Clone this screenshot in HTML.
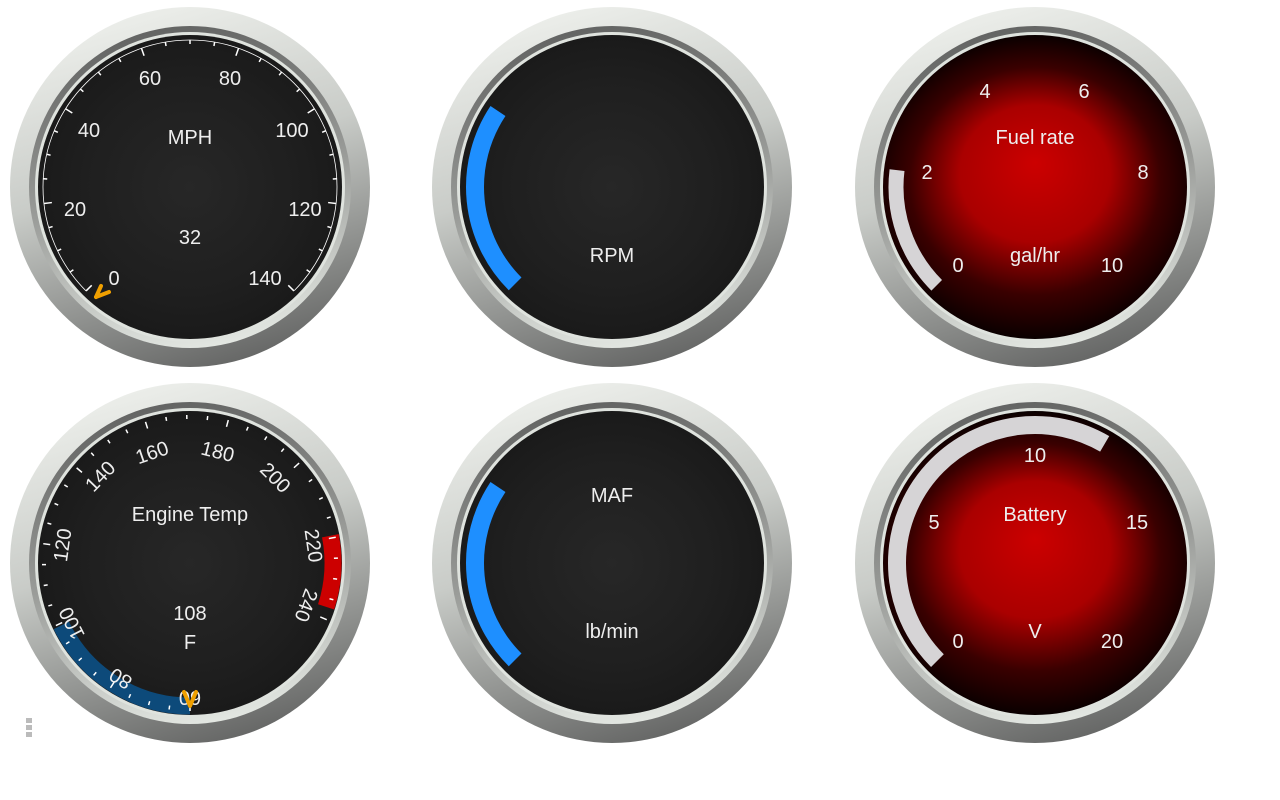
<!DOCTYPE html>
<html><head><meta charset="utf-8"><style>
html,body{margin:0;padding:0;background:#fff;width:1280px;height:800px;overflow:hidden}
svg{display:block}
text{font-family:"Liberation Sans",sans-serif;fill:#eeeeee;font-size:20px}
</style></head><body>
<svg width="1280" height="800" viewBox="0 0 1280 800" xmlns="http://www.w3.org/2000/svg">
<defs>
<linearGradient id="outer" x1="0.3" y1="0" x2="0.6" y2="1">
<stop offset="0" stop-color="#eef0ec"/><stop offset="0.45" stop-color="#c9ccc8"/><stop offset="1" stop-color="#666766"/></linearGradient>
<linearGradient id="inner" x1="0.4" y1="0" x2="0.6" y2="1">
<stop offset="0" stop-color="#626362"/><stop offset="0.5" stop-color="#9a9c99"/><stop offset="1" stop-color="#e4e8e3"/></linearGradient>
<radialGradient id="dark" cx="0.5" cy="0.5" r="0.5">
<stop offset="0" stop-color="#272727"/><stop offset="0.7" stop-color="#1f1f1f"/><stop offset="1" stop-color="#1a1a1a"/></radialGradient>
<radialGradient id="red" cx="0.5" cy="0.5" r="0.5" fx="0.5" fy="0.42" gradientTransform="translate(0.5 0.5) scale(1.1 1) translate(-0.5 -0.5)">
<stop offset="0" stop-color="#cc0000"/><stop offset="0.45" stop-color="#aa0000"/><stop offset="0.75" stop-color="#3a0000"/><stop offset="1" stop-color="#0a0000"/></radialGradient>
<g id="bezel"><circle r="180" fill="url(#outer)"/><circle r="161" fill="url(#inner)"/><circle r="155" fill="#dfe3de"/></g>
</defs>

<!-- Gauge 1 MPH -->
<g transform="translate(190 187)">
<use href="#bezel"/><circle r="152" fill="url(#dark)"/>
<g id="spd" stroke="#fff" stroke-width="1.5"></g>
</g>
<text x="150" y="85" text-anchor="middle">60</text>
<text x="230" y="85" text-anchor="middle">80</text>
<text x="89" y="137" text-anchor="middle">40</text>
<text x="292" y="137" text-anchor="middle">100</text>
<text x="75" y="216" text-anchor="middle">20</text>
<text x="305" y="216" text-anchor="middle">120</text>
<text x="114" y="285" text-anchor="middle">0</text>
<text x="265" y="285" text-anchor="middle">140</text>
<text x="190" y="144" text-anchor="middle">MPH</text>
<text x="190" y="244" text-anchor="middle">32</text>
<path d="M96 297 L101 286 M96 297 L109 292" stroke="#f0a000" stroke-width="4" fill="none" stroke-linecap="round"/>

<!-- Gauge 2 RPM -->
<g transform="translate(612 187)">
<use href="#bezel"/><circle r="152" fill="url(#dark)"/>
<circle r="137" fill="none" stroke="#1e8fff" stroke-width="18" stroke-dasharray="188 700" transform="rotate(135)"/>
</g>
<text x="612" y="262" text-anchor="middle">RPM</text>

<!-- Gauge 3 Fuel -->
<g transform="translate(1035 187)">
<use href="#bezel"/><circle r="152" fill="url(#red)"/>
<circle r="139" fill="none" stroke="#d6d4d6" stroke-width="15" stroke-dasharray="126 800" transform="rotate(135)"/>
</g>
<text x="985" y="98" text-anchor="middle">4</text>
<text x="1084" y="98" text-anchor="middle">6</text>
<text x="927" y="179" text-anchor="middle">2</text>
<text x="1143" y="179" text-anchor="middle">8</text>
<text x="958" y="272" text-anchor="middle">0</text>
<text x="1112" y="272" text-anchor="middle">10</text>
<text x="1035" y="144" text-anchor="middle">Fuel rate</text>
<text x="1035" y="262" text-anchor="middle">gal/hr</text>

<!-- Gauge 4 Temp -->
<g transform="translate(190 563)">
<use href="#bezel"/><circle r="152" fill="url(#dark)"/>
<circle r="143" fill="none" stroke="#0d4a7a" stroke-width="17" stroke-dasharray="160 800" transform="rotate(90)"/>
<circle r="143" fill="none" stroke="#cc0000" stroke-width="17" stroke-dasharray="72 900" transform="rotate(-11)"/>
<g id="tmp" stroke="#fff" stroke-width="1.5"></g>
<g text-anchor="middle" dominant-baseline="central" style="font-size:21px">
<text transform="rotate(180) translate(0 -134)">60</text>
<text transform="rotate(211) translate(0 -134)">80</text>
<text transform="rotate(243) translate(0 -132)">100</text>
<text transform="rotate(278) translate(0 -128)">120</text>
<text transform="rotate(314) translate(0 -124)">140</text>
<text transform="rotate(341) translate(0 -116)">160</text>
<text transform="rotate(14) translate(0 -114)">180</text>
<text transform="rotate(45) translate(0 -120)">200</text>
<text transform="rotate(82) translate(0 -124)">220</text>
<text transform="rotate(110) translate(0 -123)">240</text>
</g>
</g>
<text x="190" y="521" text-anchor="middle">Engine Temp</text>
<text x="190" y="620" text-anchor="middle">108</text>
<text x="190" y="649" text-anchor="middle">F</text>
<path d="M184 692 L190 706 L196 692" stroke="#f0a000" stroke-width="4" fill="none" stroke-linecap="round" stroke-linejoin="round"/>

<!-- Gauge 5 MAF -->
<g transform="translate(612 563)">
<use href="#bezel"/><circle r="152" fill="url(#dark)"/>
<circle r="137" fill="none" stroke="#1e8fff" stroke-width="18" stroke-dasharray="188 700" transform="rotate(135)"/>
</g>
<text x="612" y="502" text-anchor="middle">MAF</text>
<text x="612" y="638" text-anchor="middle">lb/min</text>

<!-- Gauge 6 Battery -->
<g transform="translate(1035 563)">
<use href="#bezel"/><circle r="152" fill="url(#red)"/>
<circle r="138" fill="none" stroke="#d6d4d6" stroke-width="18" stroke-dasharray="398 500" transform="rotate(135)"/>
</g>
<text x="1035" y="462" text-anchor="middle">10</text>
<text x="934" y="529" text-anchor="middle">5</text>
<text x="1137" y="529" text-anchor="middle">15</text>
<text x="958" y="648" text-anchor="middle">0</text>
<text x="1112" y="648" text-anchor="middle">20</text>
<text x="1035" y="521" text-anchor="middle">Battery</text>
<text x="1035" y="638" text-anchor="middle">V</text>

<rect x="26" y="718" width="6" height="5" fill="#bbb"/>
<rect x="26" y="725" width="6" height="5" fill="#bbb"/>
<rect x="26" y="732" width="6" height="5" fill="#bbb"/>
</svg>
<script>
(function(){
var ns="http://www.w3.org/2000/svg";
function line(g,a,r1,r2){var t=a*Math.PI/180,l=document.createElementNS(ns,"line");
l.setAttribute("x1",r1*Math.sin(t));l.setAttribute("y1",-r1*Math.cos(t));
l.setAttribute("x2",r2*Math.sin(t));l.setAttribute("y2",-r2*Math.cos(t));g.appendChild(l);}
var s=document.getElementById("spd");
var c=document.createElementNS(ns,"circle");c.setAttribute("r","147");c.setAttribute("fill","none");c.setAttribute("stroke-width","0.8");c.setAttribute("stroke-dasharray","692 300");c.setAttribute("transform","rotate(135)");s.appendChild(c);
for(var i=0;i<=28;i++){var a=-135+i*270/28;line(s,a,i%4==0?139:143,147);}
var t=document.getElementById("tmp");
for(var j=0;j<=36;j++){var b=180+j*32.5/4;line(t,b,j%4==0?141:144,148);}
})();
</script>
</body></html>
